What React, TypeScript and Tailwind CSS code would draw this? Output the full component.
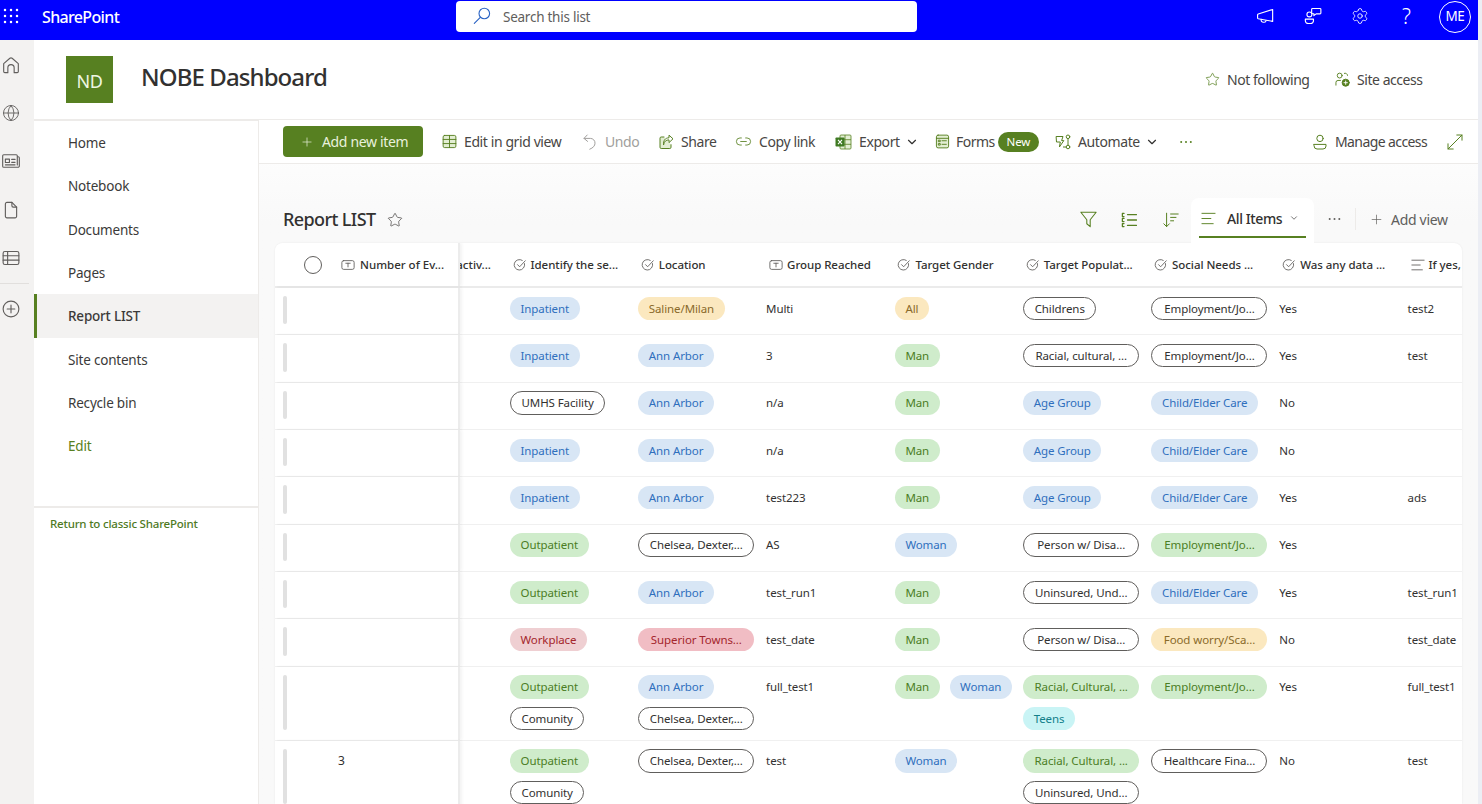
import React from 'react';
import { ChevronDown, Plus, Globe, Settings, Star, Link2 } from 'lucide-react';

type Tone = 'blue' | 'green' | 'yellow' | 'red' | 'rose' | 'cyan' | 'line';
type Pill = [string, Tone];

interface Row {
  count?: string;
  setting: Pill[];
  location: Pill[];
  group: string;
  gender: Pill[];
  population: Pill[];
  needs: Pill[];
  data: string;
  ifYes: string;
}

const toneClass: Record<Tone, string> = {
  blue: 'bg-[#d8e6f5] text-[#2f6fbd]',
  green: 'bg-[#cfeccb] text-[#4b7d24]',
  yellow: 'bg-[#fbe8bf] text-[#8a6a2a]',
  red: 'bg-[#efcfd2] text-[#a4262c]',
  rose: 'bg-[#f1bdc4] text-[#a4262c]',
  cyan: 'bg-[#c9f4f5] text-[#12808a]',
  line: 'bg-white text-[#323130] border border-[#605e5c]',
};

const inpatient: Pill = ['Inpatient', 'blue'];
const outpatient: Pill = ['Outpatient', 'green'];
const comunity: Pill = ['Comunity', 'line'];
const annArbor: Pill = ['Ann Arbor', 'blue'];
const chelsea: Pill = ['Chelsea, Dexter,...', 'line'];
const man: Pill = ['Man', 'green'];
const woman: Pill = ['Woman', 'blue'];
const ageGroup: Pill = ['Age Group', 'blue'];
const childCare: Pill = ['Child/Elder Care', 'blue'];
const jobLine: Pill = ['Employment/Jo...', 'line'];
const jobGreen: Pill = ['Employment/Jo...', 'green'];
const disability: Pill = ['Person w/ Disa...', 'line'];
const uninsured: Pill = ['Uninsured, Und...', 'line'];
const racialGreen: Pill = ['Racial, Cultural, ...', 'green'];

const rows: Row[] = [
  { setting: [inpatient], location: [['Saline/Milan', 'yellow']], group: 'Multi', gender: [['All', 'yellow']], population: [['Childrens', 'line']], needs: [jobLine], data: 'Yes', ifYes: 'test2' },
  { setting: [inpatient], location: [annArbor], group: '3', gender: [man], population: [['Racial, cultural, ...', 'line']], needs: [jobLine], data: 'Yes', ifYes: 'test' },
  { setting: [['UMHS Facility', 'line']], location: [annArbor], group: 'n/a', gender: [man], population: [ageGroup], needs: [childCare], data: 'No', ifYes: '' },
  { setting: [inpatient], location: [annArbor], group: 'n/a', gender: [man], population: [ageGroup], needs: [childCare], data: 'No', ifYes: '' },
  { setting: [inpatient], location: [annArbor], group: 'test223', gender: [man], population: [ageGroup], needs: [childCare], data: 'Yes', ifYes: 'ads' },
  { setting: [outpatient], location: [chelsea], group: 'AS', gender: [woman], population: [disability], needs: [jobGreen], data: 'Yes', ifYes: '' },
  { setting: [outpatient], location: [annArbor], group: 'test_run1', gender: [man], population: [uninsured], needs: [childCare], data: 'Yes', ifYes: 'test_run1' },
  { setting: [['Workplace', 'red']], location: [['Superior Towns...', 'rose']], group: 'test_date', gender: [man], population: [disability], needs: [['Food worry/Sca...', 'yellow']], data: 'No', ifYes: 'test_date' },
  { setting: [outpatient, comunity], location: [annArbor, chelsea], group: 'full_test1', gender: [man, woman], population: [racialGreen, ['Teens', 'cyan']], needs: [jobGreen], data: 'Yes', ifYes: 'full_test1' },
  { count: '3', setting: [outpatient, comunity], location: [chelsea], group: 'test', gender: [woman], population: [racialGreen, uninsured], needs: [['Healthcare Fina...', 'line']], data: 'No', ifYes: 'test' },
];

const navItems = ['Home', 'Notebook', 'Documents', 'Pages', 'Report LIST', 'Site contents', 'Recycle bin'];

const gridCols = 'grid grid-cols-[185px_44px_repeat(8,128.3px)]';

function Chip({ label, tone }: { label: string; tone: Tone }) {
  const wide = label.endsWith('...');
  return (
    <span className={`inline-flex h-[23.5px] items-center justify-center rounded-full text-[11.5px] tracking-[-0.1px] whitespace-nowrap ${wide ? 'w-[116px]' : 'px-[10.5px]'} ${toneClass[tone]}`}>
      {label}
    </span>
  );
}

function Svg({ size = 16, className = '', children }: { size?: number; className?: string; children: React.ReactNode }) {
  return (
    <svg width={size} height={size} viewBox="0 0 16 16" fill="none" stroke="currentColor" strokeWidth={1} strokeLinecap="round" strokeLinejoin="round" className={`shrink-0 ${className}`}>
      {children}
    </svg>
  );
}

function Dots({ size, className }: { size: number; className: string }) {
  return (
    <svg width={size} height="4" viewBox="0 0 12 4" fill="currentColor" className={`shrink-0 ${className}`}>
      <circle cx="1.2" cy="2" r="1" />
      <circle cx="6" cy="2" r="1" />
      <circle cx="10.8" cy="2" r="1" />
    </svg>
  );
}

const CheckCircle = () => (
  <Svg size={14} className="text-[#605e5c]">
    <path d="M13.2 6.4A6 6 0 1 1 10.6 2.7" />
    <path d="M5.2 7.6 7.6 10 14 3.2" />
  </Svg>
);

const TextBox = () => (
  <Svg size={14} className="text-[#605e5c]">
    <rect x="1" y="3" width="14" height="10" rx="2" />
    <path d="M5.5 6h5M8 6v4.2" />
  </Svg>
);

const Lines = ({ className = 'text-[#605e5c]', size = 14 }: { className?: string; size?: number }) => (
  <Svg size={size} className={className}>
    <path d="M1 2.5h14M1 8h9.5M1 13.5h12" />
  </Svg>
);

function Waffle() {
  const at = [2, 8, 14];
  return (
    <svg width="16" height="16" viewBox="0 0 16 16" fill="#fff">
      {at.map((y) => at.map((x) => <circle key={`${x}-${y}`} cx={x} cy={y} r="1.25" />))}
    </svg>
  );
}

function TopBar() {
  return (
    <div className="flex h-10 items-center bg-[#0000ff] text-white">
      <div className="ml-[3px] w-[39px] -mt-[9px]"><Waffle /></div>
      <span className="w-[414px] -mt-[6px] text-[16px] font-medium tracking-[-0.65px]">SharePoint</span>
      <div className="flex h-[31px] w-[461px] -mt-[8px] items-center rounded-[4px] bg-white pl-[17px]">
        <svg width="18" height="18" viewBox="0 0 18 18" fill="none" stroke="#2b64c4" strokeWidth="1.1" strokeLinecap="round">
          <circle cx="11.3" cy="6.5" r="5.3" />
          <path d="M7.3 10.3 1.3 16.3" />
        </svg>
        <span className="ml-[12px] pt-[2px] text-[13.5px] tracking-[-0.25px] text-[#605e5c]">Search this list</span>
      </div>
      <div className="ml-[339px] flex w-[183px] -mt-[8px] items-center">
        <Svg size={18} className="mr-[30px]">
          <path d="M14.8 2.2v10.6L2 10.4a1 1 0 0 1-.6-.9V7.2a1 1 0 0 1 .6-.9z" />
          <path d="M4.6 11v.8a1.8 1.8 0 0 0 1.8 1.8h.8a1.8 1.8 0 0 0 1.8-1.6" />
        </Svg>
        <Svg size={18} className="mr-[29px]">
          <circle cx="4.8" cy="6.6" r="2.2" />
          <path d="M1.2 10.8h7.2v1.6a2.6 2.6 0 0 1-2.6 2.3H3.8a2.6 2.6 0 0 1-2.6-2.3z" />
          <path d="M7.6 1.3h6.6a.8.8 0 0 1 .8.8v3.2a.8.8 0 0 1-.8.8h-3.4L8.8 7.6V6h-1.2a.8.8 0 0 1-.8-.8V2.1a.8.8 0 0 1 .8-.8z" />
        </Svg>
        <Settings size={18} strokeWidth={1.15} className="mr-[33px] shrink-0" />
        <span className="text-[21px] font-light leading-none">?</span>
      </div>
      <div className="-mt-[7px] flex h-[32px] w-[32px] items-center justify-center rounded-full border border-white text-[13.5px] tracking-[-0.3px]">ME</div>
    </div>
  );
}

function Rail() {
  return (
    <div className="flex w-[34px] shrink-0 flex-col bg-[#f3f2f1] pl-[1.5px] text-[#605e5c]">
      <Svg size={18} className="mt-[16px]">
        <path d="M1.5 6.8 7 2a1.6 1.6 0 0 1 2 0l5.5 4.8v7a1 1 0 0 1-1 1H10.8v-4.3a2.8 2.8 0 0 0-5.6 0v4.3H2.5a1 1 0 0 1-1-1z" />
      </Svg>
      <Globe size={18} strokeWidth={1.2} className="mt-[30px]" />
      <Svg size={18} className="mt-[30px]">
        <path d="M13.6 4.2V3.4a1 1 0 0 0-1-1H1.6a1 1 0 0 0-1 1v9.2a1 1 0 0 0 1 1h12.6a1.2 1.2 0 0 0 1.2-1.2V5.2a1 1 0 0 0-1-1zM13.6 4.2v7.4" />
        <rect x="3" y="6.3" width="3.6" height="3" />
        <path d="M8.6 6.6h3M8.6 9.2h3M3 11.4h8.6" />
      </Svg>
      <Svg size={18} className="mt-[31px]">
        <path d="M3 2.6a1.4 1.4 0 0 1 1.4-1.4h4.4L13 5.4v8.2a1.4 1.4 0 0 1-1.4 1.4H4.4A1.4 1.4 0 0 1 3 13.6z" />
        <path d="M8.8 1.2v3a1.2 1.2 0 0 0 1.2 1.2h3" />
      </Svg>
      <Svg size={18} className="mt-[30px]">
        <rect x="1" y="2.2" width="14" height="11.6" rx="1.6" />
        <path d="M1 6h14M1 9.9h14M5 2.2v11.6" />
      </Svg>
      <div className="-ml-[1.5px] mt-[16px] h-px w-[29px] bg-[#e1dfdd]" />
      <Svg size={18} className="mt-[16px]">
        <circle cx="8" cy="8" r="7" />
        <path d="M8 4.6v6.8M4.6 8h6.8" />
      </Svg>
    </div>
  );
}

function SiteHeader() {
  return (
    <div className="flex h-[80px] shrink-0 items-center border-b-[1px] border-[#edebe9] bg-white pl-[32px]">
      <div className="flex h-[47px] w-[47px] items-center justify-center bg-[#578021] pt-[3px] text-[18px] tracking-[-0.3px] text-[#eef6e2]">ND</div>
      <span className="ml-[28px] w-[1064px] -mt-[6px] text-[24px] font-medium tracking-[-0.9px] text-[#323130]">NOBE Dashboard</span>
      <Star size={15} strokeWidth={1.2} className="text-[#578021]" />
      <span className="ml-[7px] w-[108px] text-[14px] tracking-[-0.45px] text-[#484644]">Not following</span>
      <Svg size={15} className="text-[#578021]">
        <circle cx="5" cy="3.8" r="2.6" />
        <path d="M1 14v-2.8A2.2 2.2 0 0 1 3.2 9h2.6M10 1.4a2.4 2.4 0 0 1 3.4 2.2" />
        <circle cx="11.4" cy="11.4" r="3.8" fill="currentColor" />
        <path d="M11.4 9.6v3.6M9.6 11.4h3.6" stroke="#fff" />
      </Svg>
      <span className="ml-[7px] text-[14px] tracking-[-0.45px] text-[#484644]">Site access</span>
    </div>
  );
}

function SideNav() {
  return (
    <div className="flex w-[225px] shrink-0 flex-col border-r border-[#edebe9] border-t border-t-[#edebe9] bg-white">
      {navItems.map((item) => {
        const active = item === 'Report LIST';
        return (
          <div
            key={item}
            className={`flex h-[43.35px] items-center pt-[1px] text-[13.5px] tracking-[-0.2px] text-[#3b3a39] ${active ? 'border-l-[3px] border-[#578021] bg-[#f3f2f1] pl-[31px] font-medium' : 'pl-[34px]'}`}
          >
            {item}
          </div>
        );
      })}
      <div className="flex h-[43.35px] items-center pl-[34px] pt-[1px] text-[13.5px] tracking-[-0.2px] text-[#578021]">Edit</div>
      <div className="mt-[38px] h-[2px] bg-[#edebe9]" />
      <div className="pl-4 pt-[7px] text-[11.5px] font-medium tracking-[-0.2px] text-[#4f7a1f]">Return to classic SharePoint</div>
    </div>
  );
}

function CmdItem({ width, label, icon, muted, chevron }: { width: string; label: React.ReactNode; icon: React.ReactNode; muted?: boolean; chevron?: boolean }) {
  return (
    <div className={`flex shrink-0 items-center gap-[7px] text-[14px] tracking-[-0.4px] whitespace-nowrap ${width} ${muted ? 'text-[#a19f9d]' : 'text-[#484644]'}`}>
      {icon}
      <span>{label}</span>
      {chevron && <ChevronDown size={14} strokeWidth={2} className="ml-[-2px] text-[#323130]" />}
    </div>
  );
}

const cmdIcon = 'text-[#578021]';

function CommandBar() {
  return (
    <div className="flex h-[44px] shrink-0 items-center border-b border-[#edebe9] bg-white pl-[24px]">
      <div className="flex h-[31px] w-[140px] items-center rounded-[4px] bg-[#578021] pl-[17px] text-[14px] tracking-[-0.35px] text-[#e9f1dc]">
        <Plus size={14} strokeWidth={1.2} />
        <span className="ml-[8px]">Add new item</span>
      </div>
      <div className="w-[19px]" />
      <CmdItem width="w-[140px]" label="Edit in grid view" icon={
        <Svg size={15} className={cmdIcon}>
          <rect x="1.2" y="1.5" width="13.6" height="13" rx="1.6" fill="#e3eed3" />
          <path d="M1.2 5.8h13.6M1.2 10.2h13.6M8 1.5v13" />
        </Svg>
      } />
      <CmdItem width="w-[76px]" label="Undo" muted icon={
        <Svg size={16}>
          <path d="M5.2 1 2 4.4l3.6 3M2 4.4h6.4a4.6 4.6 0 0 1 4.6 4.8c0 2.6-1.8 4.6-5.2 6" />
        </Svg>
      } />
      <CmdItem width="w-[77px]" label="Share" icon={
        <Svg size={16} className={cmdIcon}>
          <path d="M6 3H3.2a1.2 1.2 0 0 0-1.2 1.2v9.1a1.2 1.2 0 0 0 1.2 1.2h8.6a1.2 1.2 0 0 0 1.2-1.2v-2.6" fill="#e3eed3" />
          <path d="M5.6 10.5c.3-3 2.4-4.6 5.4-4.6V8.6l4-3.8-4-3.6v2.6C7 3.9 5.2 6.6 5.6 10.5z" fill="#fff" />
        </Svg>
      } />
      <CmdItem width="w-[100px]" label="Copy link" icon={<Link2 size={17} strokeWidth={1.2} className={cmdIcon} />} />
      <CmdItem width="w-[100px]" label="Export" chevron icon={
        <svg width="17" height="16" viewBox="0 0 17 16" className="shrink-0">
          <rect x="5" y="1" width="11" height="14" rx="1" fill="#e3eed3" stroke="#578021" strokeWidth="0.8" />
          <path d="M10 1v14M5 5.7h11M5 10.3h11" stroke="#578021" strokeWidth="0.8" />
          <rect x="0.5" y="3.5" width="9" height="9" rx="0.8" fill="#3f7a23" />
          <path d="M3 5.8 7 10.2M7 5.8 3 10.2" stroke="#fff" strokeWidth="1.1" />
        </svg>
      } />
      <div className="flex w-[120px] shrink-0 items-center">
        <Svg size={15} className={cmdIcon}>
          <rect x="1.5" y="1.2" width="13" height="13.6" rx="1.8" fill="#e3eed3" />
          <path d="M1.5 4.6h13M7.5 7.2h4.6M7.5 11h4.6" />
          <rect x="4" y="6.6" width="1.6" height="1.6" />
          <rect x="4" y="10.2" width="1.6" height="1.6" />
        </Svg>
        <span className="ml-[6px] text-[14px] tracking-[-0.5px] text-[#484644]">Forms</span>
        <span className="ml-[3px] flex h-5 w-[41px] items-center justify-center rounded-full bg-[#578021] text-[11.5px] tracking-[-0.2px] text-white">New</span>
      </div>
      <CmdItem width="w-[125px]" label="Automate" chevron icon={
        <Svg size={16} className={cmdIcon}>
          <path d="M1.5 2.5h6.5L6.6 6.6h2.2L4.4 13l.9-5H1.9z" />
          <circle cx="13" cy="2.8" r="1.8" />
          <circle cx="13" cy="13" r="1.8" />
          <path d="M13 4.6v6.6M8.4 13h2.8" />
        </Svg>
      } />
      <div className="w-[132px]"><Dots size={12} className="text-[#578021]" /></div>
      <CmdItem width="w-[135px]" label={<span className="tracking-[-0.6px]">Manage access</span>} icon={
        <Svg size={16} className={cmdIcon}>
          <circle cx="8" cy="4.4" r="3.2" />
          <path d="M2 10.4h12v1.6a3 3 0 0 1-3 3H5a3 3 0 0 1-3-3z" />
        </Svg>
      } />
      <Svg size={16} className={cmdIcon}>
        <path d="M9.8 1h5.2v5.2M15 1 1 15M1 9.8V15h5.2" />
      </Svg>
    </div>
  );
}

function ViewBar() {
  return (
    <div className="flex h-[79px] shrink-0 items-end pl-[24px]">
      <div className="mb-[10px] flex w-[797px] items-center">
        <span className="text-[18px] font-medium tracking-[-0.6px] text-[#323130]">Report LIST</span>
        <Star size={16} strokeWidth={1.1} className="ml-[12px] text-[#484644]" />
      </div>
      <div className="mb-[15px] flex w-[111px] items-center text-[#578021]">
        <Svg size={17} className="mr-[24px]">
          <path d="M.8 1.2h14.4L9.6 8.2v6.6L6.4 12V8.2z" />
        </Svg>
        <Svg size={16} className="mr-[26px]">
          <path d="M6.5 2.6h9M6.5 8h9M6.5 13.4h9M3 1.4H1.4v3.2H3M3 6.4H1.4v3.2H3M3 11.6H1.4v3H3" strokeWidth="1.3" />
        </Svg>
        <Svg size={16}>
          <path d="M3.6 1.2v13.4M.8 11.8l2.8 2.8 2.8-2.8M7.6 2h7.6M7.6 5.4h5.4M7.6 8.8h3" />
        </Svg>
      </div>
      <div className="z-10 flex h-[45px] w-[123px] flex-col rounded-t-[8px] bg-white px-2">
        <div className="flex flex-1 items-center pl-[2px] pt-[2px]">
          <Lines size={15} className="text-[#578021]" />
          <span className="ml-[11px] w-[54px] text-[14px] font-medium tracking-[-0.4px] whitespace-nowrap text-[#323130]">All Items</span>
          <ChevronDown size={10} strokeWidth={1.6} className="ml-[8px] text-[#323130]" />
        </div>
        <div className="mb-[5px] h-[2px] bg-[#578021]" />
      </div>
      <div className="mb-[13px] flex items-center text-[#605e5c]">
        <Dots size={13} className="ml-[14px] mr-[14px]" />
        <div className="h-[22px] w-px bg-[#edebe9]" />
        <Plus size={15} strokeWidth={1.1} className="ml-[13px]" />
        <span className="ml-[7px] text-[14px] tracking-[-0.3px]">Add view</span>
      </div>
    </div>
  );
}

function HeadCell({ label, icon = <CheckCircle /> }: { label: string; icon?: React.ReactNode }) {
  return (
    <div className="flex items-center gap-[4px] pl-[8.5px] text-[11.5px] font-medium tracking-[-0.05px] whitespace-nowrap text-[#323130]">
      {icon}
      <span>{label}</span>
    </div>
  );
}

function PillCell({ items }: { items: Pill[] }) {
  return (
    <div className="flex flex-wrap content-start gap-x-[10px] gap-y-[8px] pl-[6px]">
      {items.map(([label, tone], i) => <Chip key={`${label}-${i}`} label={label} tone={tone} />)}
    </div>
  );
}

function TextCell({ value }: { value: string }) {
  return <div className="h-[24px] pl-[5.5px] text-[11.5px] leading-[24px] tracking-[-0.1px] text-[#323130]">{value}</div>;
}

function ListTable() {
  return (
    <div className="ml-4 w-[1187px] flex-1 overflow-hidden rounded-t-[8px] bg-white text-[12px] shadow-[0_0_2px_rgba(0,0,0,0.08)]">
      <div className={`${gridCols} h-[45px] items-stretch border-b-2 border-[#ebebeb]`}>
        <div className="relative z-10 flex items-center border-r-[2px] border-[#ececec] bg-white pl-[29px] shadow-[2px_0_3px_rgba(0,0,0,0.05)]">
          <span className="h-[18px] w-[18px] rounded-full border border-[#605e5c]" />
          <div className="ml-[19px] flex items-center gap-[5px] text-[11.5px] font-medium whitespace-nowrap text-[#323130]">
            <TextBox />
            <span>Number of Ev...</span>
          </div>
        </div>
        <div className="flex items-center justify-end pr-[13px] text-[11.5px] font-medium text-[#323130]">activ...</div>
        <HeadCell label="Identify the se..." />
        <HeadCell label="Location" />
        <HeadCell label="Group Reached" icon={<TextBox />} />
        <HeadCell label="Target Gender" />
        <HeadCell label="Target Populat..." />
        <HeadCell label="Social Needs ..." />
        <HeadCell label="Was any data ..." />
        <HeadCell label="If yes," icon={<Lines />} />
      </div>
      {rows.map((row, i) => (
        <div key={i} className={`${gridCols} min-h-[47.35px] border-b border-[#f0f0f0]`}>
          <div className="relative z-10 flex border-r-[2px] border-[#ececec] bg-white pl-2 pt-2 pb-[10px] shadow-[2px_0_3px_rgba(0,0,0,0.05)]">
            <span className="w-1 rounded-[2px] bg-[#e1e1e1]" />
            <span className="ml-[51px] leading-[24px] text-[#323130]">{row.count}</span>
          </div>
          <div />
          <div className="col-span-8 grid grid-cols-[repeat(8,128.3px)] pt-[8.5px] pb-[9.5px]">
            <PillCell items={row.setting} />
            <PillCell items={row.location} />
            <TextCell value={row.group} />
            <PillCell items={row.gender} />
            <PillCell items={row.population} />
            <PillCell items={row.needs} />
            <TextCell value={row.data} />
            <TextCell value={row.ifYes} />
          </div>
        </div>
      ))}
    </div>
  );
}

export default function App() {
  return (
    <div className="flex h-[804px] w-full overflow-hidden bg-[#eceef4] font-['Noto_Sans',sans-serif]">
      <div className="flex w-[1478px] shrink-0 flex-col">
        <TopBar />
        <div className="flex min-h-0 flex-1">
          <Rail />
          <div className="flex min-w-0 flex-1 flex-col bg-white">
            <SiteHeader />
            <div className="flex min-h-0 flex-1">
              <SideNav />
              <div className="flex min-w-0 flex-1 flex-col bg-gradient-to-b from-white to-[#f9f9f9] to-[15%]">
                <CommandBar />
                <ViewBar />
                <ListTable />
              </div>
            </div>
          </div>
        </div>
      </div>
    </div>
  );
}
